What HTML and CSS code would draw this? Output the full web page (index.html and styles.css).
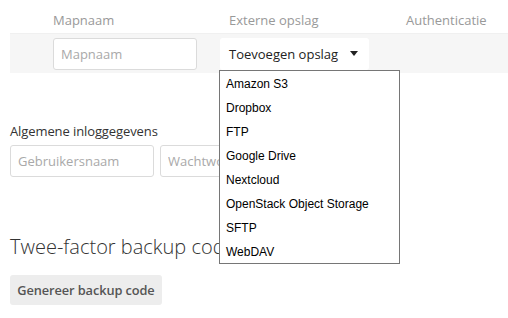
FILE: index.html
```html
<!DOCTYPE html>
<html lang="nl">
<head>
<meta charset="UTF-8">
<title>Externe opslag</title>
<link rel="stylesheet" href="styles.css">
</head>
<body>

<div class="section">
    <div class="grid header-row">
        <div></div>
        <div class="th">Mapnaam</div>
        <div class="th th-storage">Externe opslag</div>
        <div class="th">Authenticatie</div>
    </div>
    <div class="grid add-row">
        <div></div>
        <div><input type="text" class="field field-folder" placeholder="Mapnaam"></div>
        <div class="select-wrap">
            <div class="select">Toevoegen opslag <span class="caret"></span></div>
            <ul class="menu">
                <li>Amazon S3</li>
                <li>Dropbox</li>
                <li>FTP</li>
                <li>Google Drive</li>
                <li>Nextcloud</li>
                <li>OpenStack Object Storage</li>
                <li>SFTP</li>
                <li>WebDAV</li>
            </ul>
        </div>
        <div></div>
    </div>

    <div class="global">
        <p class="label">Algemene inloggegevens</p>
        <div class="cred-row">
            <input type="text" class="field" placeholder="Gebruikersnaam">
            <input type="password" class="field" placeholder="Wachtwoord">
        </div>
    </div>
</div>

<div class="section backup">
    <h2>Twee-factor backup codes</h2>
    <button>Genereer backup code</button>
</div>

</body>
</html>
```

FILE: styles.css
```css
body {
    margin: 0;
    font-family: "Open Sans", sans-serif;
    font-size: 13px;
    color: #333;
    background-color: #fff;
    overflow: hidden;
}

.section {
    padding-left: 10px;
}

.grid {
    display: grid;
    grid-template-columns: 43px 167px 186px 1fr;
}

.header-row {
    height: 34px;
    align-items: center;
    border-bottom: 1px solid #f0f0f0;
    box-sizing: border-box;
    padding-top: 7px;
}

.th {
    color: #999;
}

.th-storage {
    padding-left: 9px;
}

.add-row {
    background-color: #f6f6f6;
    height: 39px;
    align-items: center;
}

.field {
    font-family: "Open Sans", sans-serif;
    font-size: 13px;
    height: 32px;
    width: 144px;
    box-sizing: border-box;
    padding: 0 7px;
    border: 1px solid #dbdbdb;
    border-radius: 3px;
    background-color: #fff;
    color: #333;
    margin: 0;
}

.field::placeholder {
    color: #a9a9a9;
}

.select-wrap {
    position: relative;
}

.select {
    width: 149px;
    height: 32px;
    box-sizing: border-box;
    padding-left: 9px;
    display: flex;
    align-items: center;
    background-color: #fff;
    border-radius: 3px;
    color: #222;
}

.caret {
    margin-left: 12px;
    width: 0;
    height: 0;
    border-left: 4px solid transparent;
    border-right: 4px solid transparent;
    border-top: 5px solid #222;
}

.menu {
    position: absolute;
    left: -1px;
    top: 32px;
    z-index: 5;
    list-style: none;
    margin: 0;
    padding: 0;
    width: 181px;
    height: 194px;
    box-sizing: border-box;
    border: 1px solid #767676;
    background-color: #fff;
    font-family: "Liberation Sans", Arial, sans-serif;
    font-size: 12px;
    color: #000;
}

.menu li {
    height: 24px;
    line-height: 24px;
    padding-left: 6px;
}

.menu li:first-child {
    margin-top: 1px;
}

.global {
    padding-top: 49px;
}

.label {
    margin: 0 0 5px 0;
    line-height: 18px;
    letter-spacing: -0.1px;
}

.cred-row {
    display: flex;
    gap: 6px;
}

.cred-row .field {
    width: 144px;
    height: 32px;
}

.backup h2 {
    font-size: 20px;
    font-weight: 300;
    color: #333;
    margin: 56px 0 15px 0;
    line-height: 27px;
}

button {
    font-family: "Open Sans", sans-serif;
    font-size: 12.8px;
    font-weight: 600;
    color: #555;
    background-color: #ededed;
    border: none;
    border-radius: 3px;
    height: 30px;
    width: 152px;
    padding: 0;
    letter-spacing: -0.1px;
}
```
